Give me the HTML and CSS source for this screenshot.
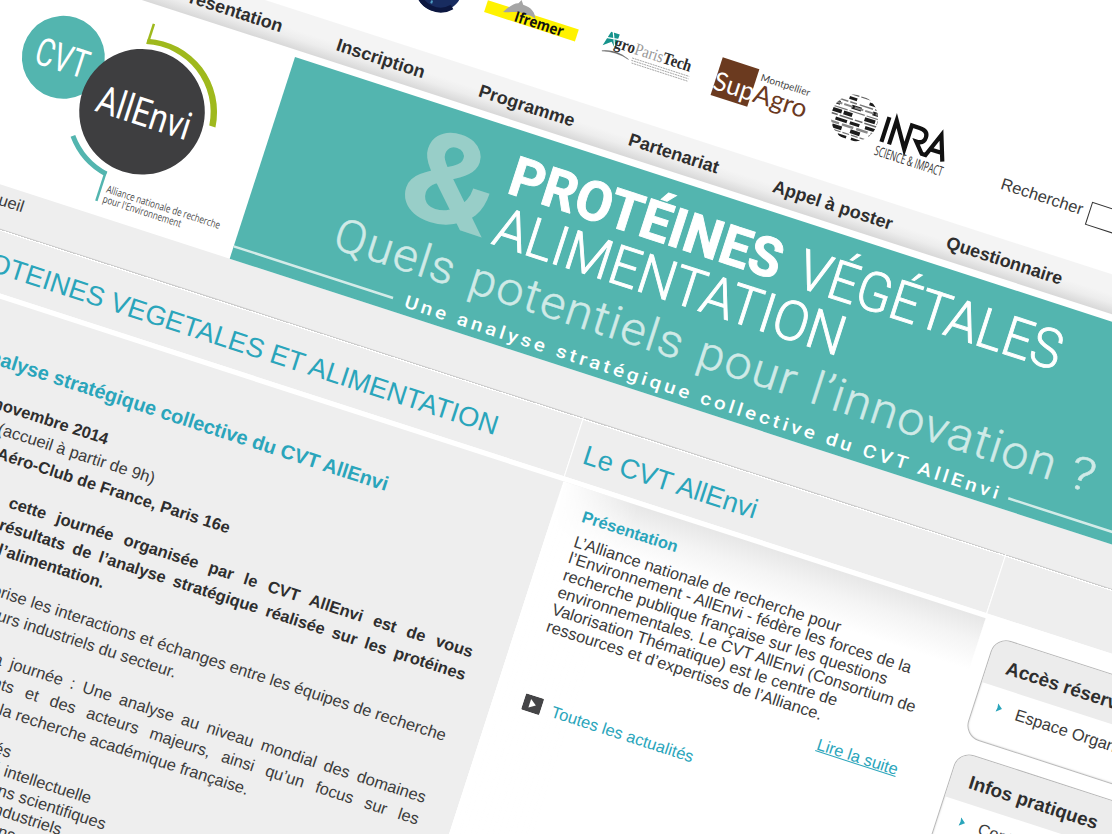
FILE: index.html
```html
<!DOCTYPE html>
<html lang="fr">
<head>
<meta charset="utf-8">
<title>Protéines végétales et alimentation</title>
<link rel="stylesheet" href="styles.css">
</head>
<body>
<div class="page">
  <header class="header">
    <svg class="logo" width="60" height="70" viewBox="85 -145 60 70">
      <circle cx="115.700" cy="-110" r="23.500" fill="#182c60"/>
      <path d="M97 -100a23 23 0 0 0 37 4" fill="none" stroke="#0c1740" stroke-width="5"/>
      <path d="M113 -112v20" stroke="#4f9dc4" stroke-width="2" stroke-dasharray="3 1"/>
    </svg>
    <svg class="logo" width="110" height="70" viewBox="160 -145 110 70">
      <path d="M166 -113.500h95.500v12.500h-95.500z" fill="#fff200"/>
      <path d="M184 -107c4-7 8-12 12-13l2-4 3 4c9 0 14 4 16 10-5-3-8-2-11-1-7-3-14 3-22 4z" fill="#a5a5a5"/>
      <text class="ifremer" x="196.500" y="-101.500" textLength="51" lengthAdjust="spacingAndGlyphs">Ifremer</text>
    </svg>
    <svg class="logo" width="100" height="70" viewBox="285 -145 100 70">
      <path d="M289 -106l4-15.500h9l-.5 14.500-5-5z" fill="#16938c"/>
      <path d="M290 -114.500l13-2M295 -122l6 14" stroke="#fff" stroke-width="1.200"/>
      <text class="agro" x="300" y="-107.500" textLength="80" lengthAdjust="spacingAndGlyphs"><tspan class="agro-strong">gro</tspan><tspan class="agro-soft">Paris</tspan><tspan class="agro-strong">Tech</tspan></text>
      <path d="M290 -100.500q14-6 28 0q-14-4-28 0z" fill="#555" stroke="#777" stroke-width=".5"/>
      <path d="M321 -103h60M321 -100.500h60M322 -98h59" stroke="#a5a5a5" stroke-width=".9" stroke-dasharray="2 .7"/>
    </svg>
    <svg class="logo" width="110" height="70" viewBox="400 -145 110 70">
      <path d="M407 -131.500h38.500v39.500h-38.500z" fill="#6b3a1f"/>
      <text class="supagro sup" x="406" y="-98.500" textLength="42" lengthAdjust="spacingAndGlyphs">Sup</text>
      <text class="supagro" x="448" y="-98.500" textLength="55" lengthAdjust="spacingAndGlyphs">Agro</text>
      <text class="montpellier" x="449.500" y="-121" textLength="51.500">Montpellier</text>
    </svg>
    <svg class="logo" width="130" height="70" viewBox="525 -145 130 70">
      <clipPath id="globe"><circle cx="551" cy="-114.500" r="23.500"/></clipPath>
      <g clip-path="url(#globe)" stroke="#1c1c1c" fill="none">
        <path d="M526 -136.500h50" stroke-width="1.200" stroke="#666" stroke-dasharray="12 3 8 2"/>
        <path d="M526 -132.500h50" stroke-width="3" stroke-dasharray="8 13" stroke-dashoffset="-14"/>
        <path d="M526 -128.500h50" stroke-width="1.500" stroke="#777" stroke-dasharray="14 2 7 3"/>
        <path d="M526 -124.500h50" stroke-width="4" stroke-dasharray="10 12" stroke-dashoffset="3"/>
        <path d="M526 -124.500h50" stroke-width="2" stroke="#888" stroke-dasharray="9 2"/>
        <path d="M526 -120h50" stroke-width="1.200" stroke="#777" stroke-dasharray="16 2"/>
        <path d="M526 -116.500h50" stroke-width="4" stroke-dasharray="11 2 9 13"/>
        <path d="M526 -112.500h50" stroke-width="1.500" stroke="#666" stroke-dasharray="8 2 14 2"/>
        <path d="M526 -108.500h50" stroke-width="3.200" stroke-dasharray="10 6 12 3" stroke-dashoffset="9"/>
        <path d="M526 -104.500h50" stroke-width="2.500" stroke="#888" stroke-dasharray="12 3"/>
        <path d="M526 -100.500h50" stroke-width="4" stroke-dasharray="10 9" stroke-dashoffset="-6"/>
        <path d="M526 -97h50" stroke-width="1.200" stroke="#777" stroke-dasharray="7 2"/>
        <path d="M526 -93.500h50" stroke-width="2.500" stroke-dasharray="9 5"/>
      </g>
      <path class="inra" d="M584 -100v-26M592 -100v-25l16 25v-25h8q9 0 9 7t-8 7l9 10h4l9-24 9 25M634 -108h12"/>
      <text class="inra-sub" x="580.500" y="-85.500" textLength="71" lengthAdjust="spacingAndGlyphs">SCIENCE &amp; IMPACT</text>
    </svg>
    <div class="search"><span>Rechercher</span><div class="search-box"></div></div>
  </header>

  <nav class="nav">
    <span>Présentation</span><span>Inscription</span><span>Programme</span><span>Partenariat</span><span>Appel à poster</span><span>Questionnaire</span>
  </nav>

  <div class="hero">
    <svg class="brand" width="560" height="212" viewBox="-560 0 560 212">
      <circle cx="-220.300" cy="71.700" r="41.500" fill="#53b5af"/>
      <circle cx="-128.700" cy="99.200" r="62.800" fill="#3e3e40"/>
      <path d="M-144.400 12v20" fill="none" stroke="#9fb91d" stroke-width="2.500"/>
      <path d="M-145.600 28A73.500 73.500 0 0 1 -54 91.500h-6.500A68 68 0 0 0 -145.600 33.500z" fill="#9fb91d"/>
      <path d="M-187 143.500A72 72 0 0 0 -143.500 169.500" fill="none" stroke="#53b5af" stroke-width="5"/>
      <path d="M-144.700 167v31" stroke="#53b5af" stroke-width="2.500"/>
      <text class="brand-name" x="-248" y="86" textLength="54" lengthAdjust="spacingAndGlyphs">CVT</text>
      <text class="brand-name" x="-175" y="113" textLength="97" lengthAdjust="spacingAndGlyphs">AllEnvi</text>
      <text class="brand-line" x="-138.500" y="187" textLength="119" lengthAdjust="spacingAndGlyphs">Alliance nationale de recherche</text>
      <text class="brand-line" x="-139" y="197.500" textLength="82" lengthAdjust="spacingAndGlyphs">pour l'Environnement</text>
    </svg>
    <svg class="banner" width="1000" height="212" viewBox="0 0 1000 212">
      <text class="amp" x="141" y="114" textLength="94" lengthAdjust="spacingAndGlyphs">&amp;</text>
      <text class="big strong" x="242" y="64" textLength="284" lengthAdjust="spacingAndGlyphs">PROTÉINES</text>
      <text class="big" x="545" y="64" textLength="275" lengthAdjust="spacingAndGlyphs">VÉGÉTALES</text>
      <text class="big" x="243" y="117" textLength="366" lengthAdjust="spacingAndGlyphs">ALIMENTATION</text>
      <g class="question">
        <text x="93" y="170" textLength="126" lengthAdjust="spacingAndGlyphs">Quels</text>
        <text x="235" y="170" textLength="224" lengthAdjust="spacingAndGlyphs">potentiels</text>
        <text x="475" y="170" textLength="103" lengthAdjust="spacingAndGlyphs">pour</text>
        <text x="594" y="170" textLength="257" lengthAdjust="spacingAndGlyphs">l’innovation</text>
        <text x="865" y="170" textLength="27" lengthAdjust="spacingAndGlyphs">?</text>
      </g>
      <text class="tagline" x="180" y="204.500" textLength="627" lengthAdjust="spacingAndGlyphs">Une analyse stratégique collective du CVT AllEnvi</text>
      <path d="M0 199h167.500M814.500 200H1000" stroke="#d3ebe8" stroke-width="2.500"/>
    </svg>
  </div>

  <div class="crumb">Accueil</div>

  <div class="titles">
    <h1 class="title title-main">PROTEINES VEGETALES ET ALIMENTATION</h1>
    <h2 class="title title-news">Le CVT AllEnvi</h2>
    <div class="title title-side"></div>
  </div>

  <div class="columns">
    <main class="main">
      <h3 class="subtitle">Une analyse stratégique collective du CVT AllEnvi</h3>
      <div class="para event">
        <p class="bold date">18 novembre 2014</p>
        <p class="hour">9h30 (accueil à partir de 9h)</p>
        <p class="bold place">Aéro-Club de France, Paris 16e</p>
      </div>
      <div class="para intro">
        <p class="bold just intro-a">cette journée organisée par le CVT AllEnvi est de vous</p>
        <p class="bold just intro-b">résultats de l’analyse stratégique réalisée sur les protéines</p>
        <p class="bold intro-c">l’alimentation.</p>
      </div>
      <div class="para exchange">
        <p>favorise les interactions et échanges entre les équipes de recherche</p>
        <p class="sector">acteurs industriels du secteur.</p>
      </div>
      <div class="para day">
        <p class="just day-a">la journée : Une analyse au niveau mondial des domaines</p>
        <p class="just day-b">récents et des acteurs majeurs, ainsi qu’un focus sur les</p>
        <p class="day-c">la recherche académique française.</p>
      </div>
      <ul class="topics">
        <li class="first">Marchés</li>
        <li>Propriété intellectuelle</li>
        <li>Publications scientifiques</li>
        <li>Secteurs industriels</li>
        <li>Organisations</li>
      </ul>
    </main>

    <section class="news">
      <h4>Présentation</h4>
      <p>L’Alliance nationale de recherche pour<br>l’Environnement - AllEnvi - fédère les forces de la<br>recherche publique française sur les questions<br>environnementales. Le CVT AllEnvi (Consortium de<br>Valorisation Thématique) est le centre de<br>ressources et d’expertises de l’Alliance.</p>
      <a class="more">Lire la suite</a>
      <div class="all">
        <svg width="19" height="17" viewBox="0 0 19 17"><rect width="19" height="17" rx="1.500" fill="#454547"/><path d="M6.500 4l6.500 4.800L6.500 13z" fill="#fff"/></svg>
        <span>Toutes les actualités</span>
      </div>
    </section>

    <aside class="side">
      <div class="box">
        <h4>Accès réservé</h4>
        <div class="item"><svg width="6" height="9" viewBox="0 0 6 9"><path d="M0 0l5.500 4.500L0 9l.8-4.500z" fill="#2aa5bb"/></svg><span>Espace Organisateurs</span></div>
      </div>
      <div class="box">
        <h4>Infos pratiques</h4>
        <div class="item"><svg width="6" height="9" viewBox="0 0 6 9"><path d="M0 0l5.500 4.500L0 9l.8-4.500z" fill="#2aa5bb"/></svg><span>Contact</span></div>
      </div>
    </aside>
  </div>
</div>
</body>
</html>
```

FILE: styles.css
```css
* { box-sizing: border-box; }
html, body { margin: 0; width: 100%; height: 100%; overflow: hidden; background: #fff; }
body { font-family: "Liberation Sans", Arial, sans-serif; font-size: 16.5px; color: #3c3c3c; }
h1, h2, h3, h4, p, ul { margin: 0; padding: 0; font-weight: normal; }
svg { display: block; flex: none; }

/* The whole site is shown tilted clockwise */
.page {
  width: 1680px;
  height: 1200px;
  transform-origin: 0 0;
  transform: translate(-139.1px, -420px) rotate(17.95deg);
}

.header { display: flex; height: 275px; padding: 175px 0 0 645px; gap: 15px; }
.ifremer { font: bold 15px "Open Sans", sans-serif; fill: #111; }
.agro { font: 17px "Liberation Serif", serif; }
.agro-strong { font-weight: bold; fill: #2b2b2b; }
.agro-soft { fill: #999; }
.supagro { font: 26px Lato, sans-serif; fill: #6b3a1f; }
.supagro.sup { fill: #fff; }
.montpellier { font: 10px Lato, sans-serif; fill: #444; }
.inra { fill: none; stroke: #111; stroke-width: 4.2; }
.inra-sub { font: 13.5px "Open Sans", sans-serif; fill: #333; }
.search { display: flex; align-items: flex-start; margin-left: 41px; }
.search span { width: 92px; line-height: 20px; padding-top: 37.3px; }
.search-box { width: 170px; height: 24px; margin-top: 36.5px; border: 1px solid #333; background: #fff; }

.nav {
  display: flex;
  gap: 57.5px;
  height: 38px;
  padding-left: 429.5px;
  line-height: 40.6px;
  font-size: 18px;
  font-weight: bold;
  color: #2e2e2e;
  white-space: nowrap;
  background: linear-gradient(#f4f4f4 0 50%, #ededed 72%, #d8d8d8);
}

.hero { display: flex; height: 219px; padding-top: 7px; }
.brand-name { font: 400 39px Roboto, sans-serif; fill: #fff; }
.brand-line { font: 10.5px "Open Sans", sans-serif; fill: #4a4a4a; }
.banner { background: #53b5af; }
.amp { font: bold 127px Roboto, sans-serif; fill: #98cec8; }
.big { font: 300 55px Roboto, sans-serif; fill: #fff; stroke: #fff; stroke-width: .9; }
.big.strong { font-weight: 700; }
.question { font: 300 46px Roboto, sans-serif; letter-spacing: 1.5px; fill: #d0eae7; stroke: #d0eae7; stroke-width: .5; }
.tagline { font: 500 18px Roboto, sans-serif; letter-spacing: 3px; fill: #fff; }

.crumb { height: 42px; padding-left: 295px; line-height: 29px; background: #eee; }

.titles { display: grid; grid-template-columns: 945.5px 444.5px 290px; height: 67px; }
.title {
  height: 67px;
  line-height: 30px;
  font-size: 27.3px;
  color: #2aa5bb;
  background: linear-gradient(#ccc 0 1.2px, #fff 1.2px 2.4px, #eee 2.4px);
  border-bottom: 5px solid #fff;
}
.title-main { padding: 20px 78px 0 0; text-align: right; border-right: 1px solid #fff; }
.title-news { padding: 20px 0 0 12px; border-right: 1.5px solid #fff; }

.columns { display: grid; grid-template-columns: 945.5px 444.5px 290px; }
.main { height: 560px; padding: 45px 33px 0 0; text-align: right; background: #eee; white-space: nowrap; }
.subtitle { padding-right: 132.5px; line-height: 24px; font-size: 19.9px; font-weight: bold; color: #2aa5bb; }
.bold { font-weight: bold; color: #2e2e2e; }
.para { line-height: 23.6px; }
.event { margin-top: 19.8px; }
.date { padding-right: 412.5px; }
.hour { padding-right: 356px; }
.place { padding-right: 269.5px; }
.intro { margin-top: 19.8px; }
.just { text-align: justify; text-align-last: justify; white-space: normal; }
.intro-a { margin-left: 425.5px; }
.intro-b { margin-left: 423px; }
.intro-c { padding-right: 372px; }
.exchange { margin-top: 16.5px; }
.sector { padding-right: 276px; }
.day { margin-top: 18px; }
.day-a { margin-left: 455px; }
.day-b { margin-left: 433px; }
.day-c { padding-right: 171px; }
.topics { margin: 16px 0 0 432px; list-style: none; text-align: left; line-height: 19.6px; }
.first { padding-left: 9px; }

.news {
  padding: 17.5px 37px 0 29.5px;
  background:
    linear-gradient(90deg, #fff, rgba(255, 255, 255, 0) 80px),
    linear-gradient(#e7e7e7, #f4f4f4 24px, #fff 54px);
}
.news h4 { line-height: 18px; font-weight: bold; color: #2aa5bb; }
.news p { margin-top: 9.2px; line-height: 17.8px; white-space: nowrap; }
.more { display: block; margin-top: 10.6px; line-height: 18px; text-align: right; color: #2aa5bb; text-decoration: underline; }
.all { display: flex; align-items: center; gap: 11px; margin: 32.5px 0 0 1px; line-height: 18px; color: #2aa5bb; }

.side { display: flex; flex-direction: column; gap: 15px; padding: 14px 0 0 14.5px; }
.box { height: 105px; border: 1.5px solid #b9b9b9; border-radius: 16px; overflow: hidden; background: #fff; box-shadow: inset 0 0 2px #ccc; }
.box h4 { height: 47px; padding-left: 19.5px; line-height: 51px; font-size: 18.8px; font-weight: bold; color: #2e2e2e; background: #ececec; }
.item { display: flex; align-items: center; gap: 14.5px; padding: 9.5px 0 0 22px; line-height: 20px; }
```
